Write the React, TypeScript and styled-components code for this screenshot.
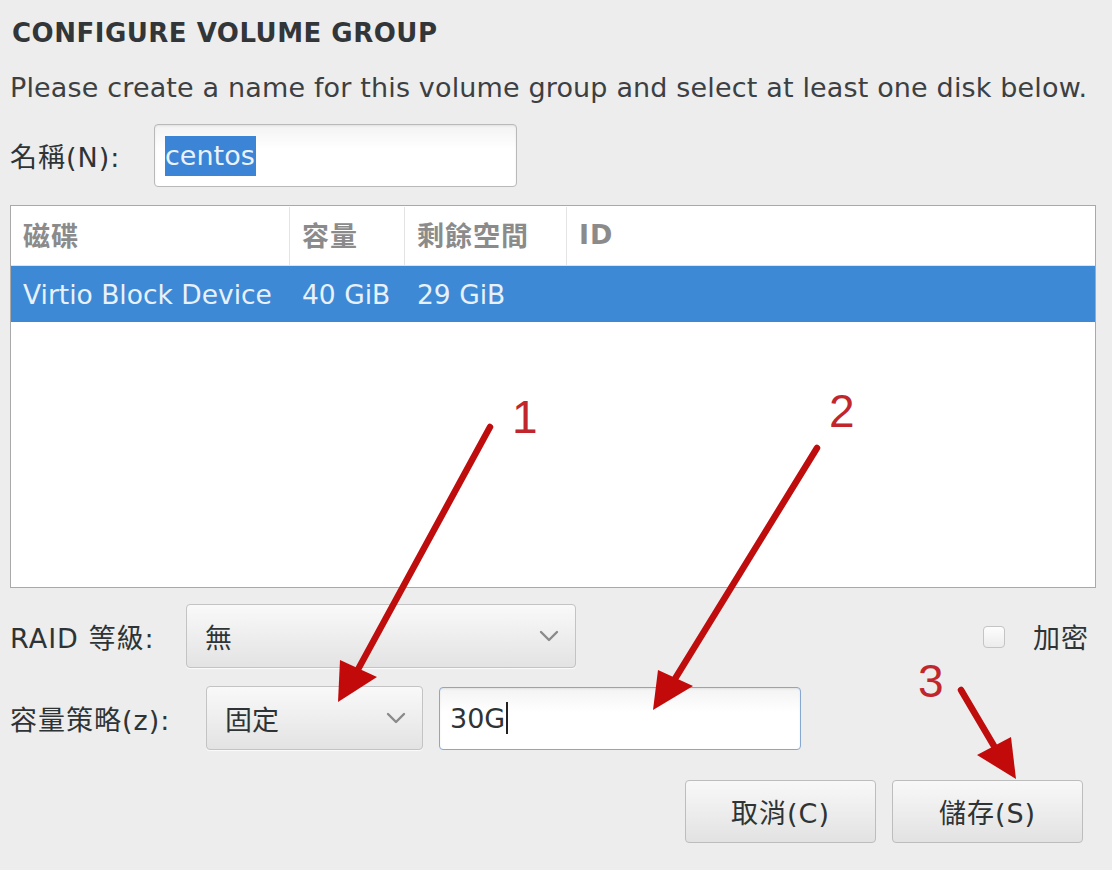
import React from "react";
import styled, { createGlobalStyle } from "styled-components";

const Global = createGlobalStyle`
  html, body { margin: 0; padding: 0; background: #ededed; }
  body { font-family: "DejaVu Sans", "Noto Sans CJK TC", sans-serif; color: #2e3436; }
`;

const Page = styled.div`
  position: relative;
  width: 1112px;
  height: 870px;
  box-sizing: border-box;
  padding: 16px 16px 0 10px;
  display: flex;
  flex-direction: column;
  overflow: hidden;
`;

const Title = styled.h1`
  margin: 0 0 0 2px;
  font-size: 26px;
  font-weight: bold;
  line-height: 34px;
  color: #333638;
  letter-spacing: 0.5px;
`;

const Subtitle = styled.p`
  margin: 22px 0 0 0;
  font-size: 27px;
  line-height: 32px;
  color: #3c4043;
  letter-spacing: 0.15px;
`;

const Row = styled.div<{ $top: number }>`
  display: flex;
  align-items: center;
  margin-top: ${(p) => p.$top}px;
`;

const Label = styled.span<{ $w: number }>`
  width: ${(p) => p.$w}px;
  flex: none;
  font-size: 27px;
  letter-spacing: 1px;
  color: #2e3436;
  white-space: nowrap;
`;

const Entry = styled.div<{ $w: number; $focus?: boolean }>`
  width: ${(p) => p.$w}px;
  height: 63px;
  box-sizing: border-box;
  border: 1px solid ${(p) => (p.$focus ? "#86a8d0" : "#b9b9b9")};
  border-radius: 4px;
  background: linear-gradient(#f3f3f3, #ffffff 40%);
  box-shadow: inset 0 1px 2px rgba(0, 0, 0, 0.08);
  display: flex;
  align-items: center;
  padding-left: 10px;
  font-size: 27px;
  color: #2e3436;
`;

const Selected = styled.span`
  background: #3b84d6;
  color: #eaf2fb;
  padding: 4px 1px 5px 0;
`;

const Caret = styled.span`
  display: inline-block;
  width: 1.5px;
  height: 32px;
  background: #222;
  margin-left: 1px;
`;

const Table = styled.div`
  margin-top: 18px;
  height: 383px;
  box-sizing: border-box;
  border: 1px solid #a9a9a9;
  background: #fff;
  display: flex;
  flex-direction: column;
`;

const HeaderRow = styled.div`
  display: flex;
  height: 58px;
  align-items: stretch;
  padding-top: 1px;
  border-bottom: 1px solid #d6e6f5;
`;

const HeadCell = styled.div<{ $w?: number; $sep?: boolean }>`
  ${(p) => (p.$w ? `width: ${p.$w}px; flex: none;` : "flex: 1;")}
  box-sizing: border-box;
  padding-left: 12px;
  display: flex;
  align-items: center;
  padding-bottom: 4px;
  border-right: ${(p) => (p.$sep ? "1px solid #e4e4e4" : "none")};
  font-size: 27px;
  font-weight: bold;
  color: #8b8b8b;
  letter-spacing: 1px;
`;

const DataRow = styled.div`
  display: flex;
  height: 56px;
  align-items: center;
  background: #3d89d6;
  color: #e8f1fa;
  font-size: 26.5px;
`;

const Cell = styled.div<{ $w?: number }>`
  ${(p) => (p.$w ? `width: ${p.$w}px; flex: none;` : "flex: 1;")}
  box-sizing: border-box;
  padding-left: 12px;
  white-space: nowrap;
`;

const Combo = styled.div<{ $w: number }>`
  width: ${(p) => p.$w}px;
  height: 64px;
  box-sizing: border-box;
  border: 1px solid #c3c3c3;
  border-radius: 4px;
  background: linear-gradient(#f9f9f9, #e3e3e3);
  box-shadow: 0 1px 1px rgba(255, 255, 255, 0.8);
  display: flex;
  align-items: center;
  justify-content: space-between;
  padding: 0 16px 0 18px;
  font-size: 27px;
  color: #2e3436;
`;

const Spacer = styled.div`
  flex: 1;
`;

const Check = styled.div`
  width: 22px;
  height: 22px;
  box-sizing: border-box;
  border: 1px solid #c4c4c4;
  border-radius: 4px;
  background: linear-gradient(#fdfdfd, #ececec);
  margin-right: 28px;
  margin-top: 2px;
`;

const CheckLabel = styled.span`
  font-size: 27px;
  letter-spacing: 1px;
  color: #2e3436;
  margin-right: 7px;
`;

const ButtonRow = styled.div`
  display: flex;
  justify-content: flex-end;
  gap: 16px;
  margin-top: 30px;
  padding-right: 13px;
`;

const Button = styled.div`
  width: 191px;
  height: 63px;
  box-sizing: border-box;
  border: 1px solid #bdbdbd;
  border-radius: 4px;
  background: linear-gradient(#f8f8f8, #e2e2e2);
  display: flex;
  align-items: center;
  justify-content: center;
  font-size: 27px;
  letter-spacing: 1px;
  color: #2e3436;
`;

const Overlay = styled.svg`
  position: absolute;
  left: 0;
  top: 0;
  pointer-events: none;
`;

const Chevron = () => (
  <svg width="20" height="12" viewBox="0 0 20 12">
    <path d="M2 2 L10 10 L18 2" fill="none" stroke="#8a8a8a" strokeWidth="2.4" strokeLinecap="round" strokeLinejoin="round" />
  </svg>
);

const Arrow = ({ x1, y1, tip, c1, c2 }: { x1: number; y1: number; tip: [number, number]; c1: [number, number]; c2: [number, number] }) => {
  const mx = (c1[0] + c2[0]) / 2;
  const my = (c1[1] + c2[1]) / 2;
  return (
    <g>
      <line x1={x1} y1={y1} x2={mx} y2={my} stroke="#bf0d0d" strokeWidth="6.5" strokeLinecap="round" />
      <polygon points={`${c1[0]},${c1[1]} ${tip[0]},${tip[1]} ${c2[0]},${c2[1]}`} fill="#c20a0a" />
    </g>
  );
};

export default function App() {
  return (
    <>
      <Global />
      <Page>
        <Title>CONFIGURE VOLUME GROUP</Title>
        <Subtitle>Please create a name for this volume group and select at least one disk below.</Subtitle>
        <Row $top={20}>
          <Label $w={144}>名稱(N):</Label>
          <Entry $w={363}>
            <Selected>centos</Selected>
          </Entry>
        </Row>
        <Table>
          <HeaderRow>
            <HeadCell $w={279} $sep>磁碟</HeadCell>
            <HeadCell $w={115} $sep>容量</HeadCell>
            <HeadCell $w={162} $sep>剩餘空間</HeadCell>
            <HeadCell>ID</HeadCell>
          </HeaderRow>
          <DataRow>
            <Cell $w={279}>Virtio Block Device</Cell>
            <Cell $w={115}>40 GiB</Cell>
            <Cell $w={162}>29 GiB</Cell>
            <Cell />
          </DataRow>
        </Table>
        <Row $top={16}>
          <Label $w={176}>RAID 等級:</Label>
          <Combo $w={390}>
            <span>無</span>
            <Chevron />
          </Combo>
          <Spacer />
          <Check />
          <CheckLabel>加密</CheckLabel>
        </Row>
        <Row $top={18}>
          <Label $w={196}>容量策略(z):</Label>
          <Combo $w={217}>
            <span>固定</span>
            <Chevron />
          </Combo>
          <Entry $w={362} $focus style={{ marginLeft: 16 }}>
            30G<Caret />
          </Entry>
        </Row>
        <ButtonRow>
          <Button>取消(C)</Button>
          <Button>儲存(S)</Button>
        </ButtonRow>
        <Overlay width="1112" height="870" viewBox="0 0 1112 870">
          <g fill="#c0262c" fontFamily="Liberation Sans, sans-serif" fontSize="46">
            <text x="512" y="433">1</text>
            <text x="829" y="427">2</text>
            <text x="918" y="697">3</text>
          </g>
          <Arrow x1={490} y1={427} tip={[338, 702]} c1={[340, 660]} c2={[377, 677]} />
          <Arrow x1={817} y1={448} tip={[653, 710]} c1={[658, 670]} c2={[693, 686]} />
          <Arrow x1={961} y1={690} tip={[1016, 779]} c1={[977, 755]} c2={[1011, 737]} />
        </Overlay>
      </Page>
    </>
  );
}
